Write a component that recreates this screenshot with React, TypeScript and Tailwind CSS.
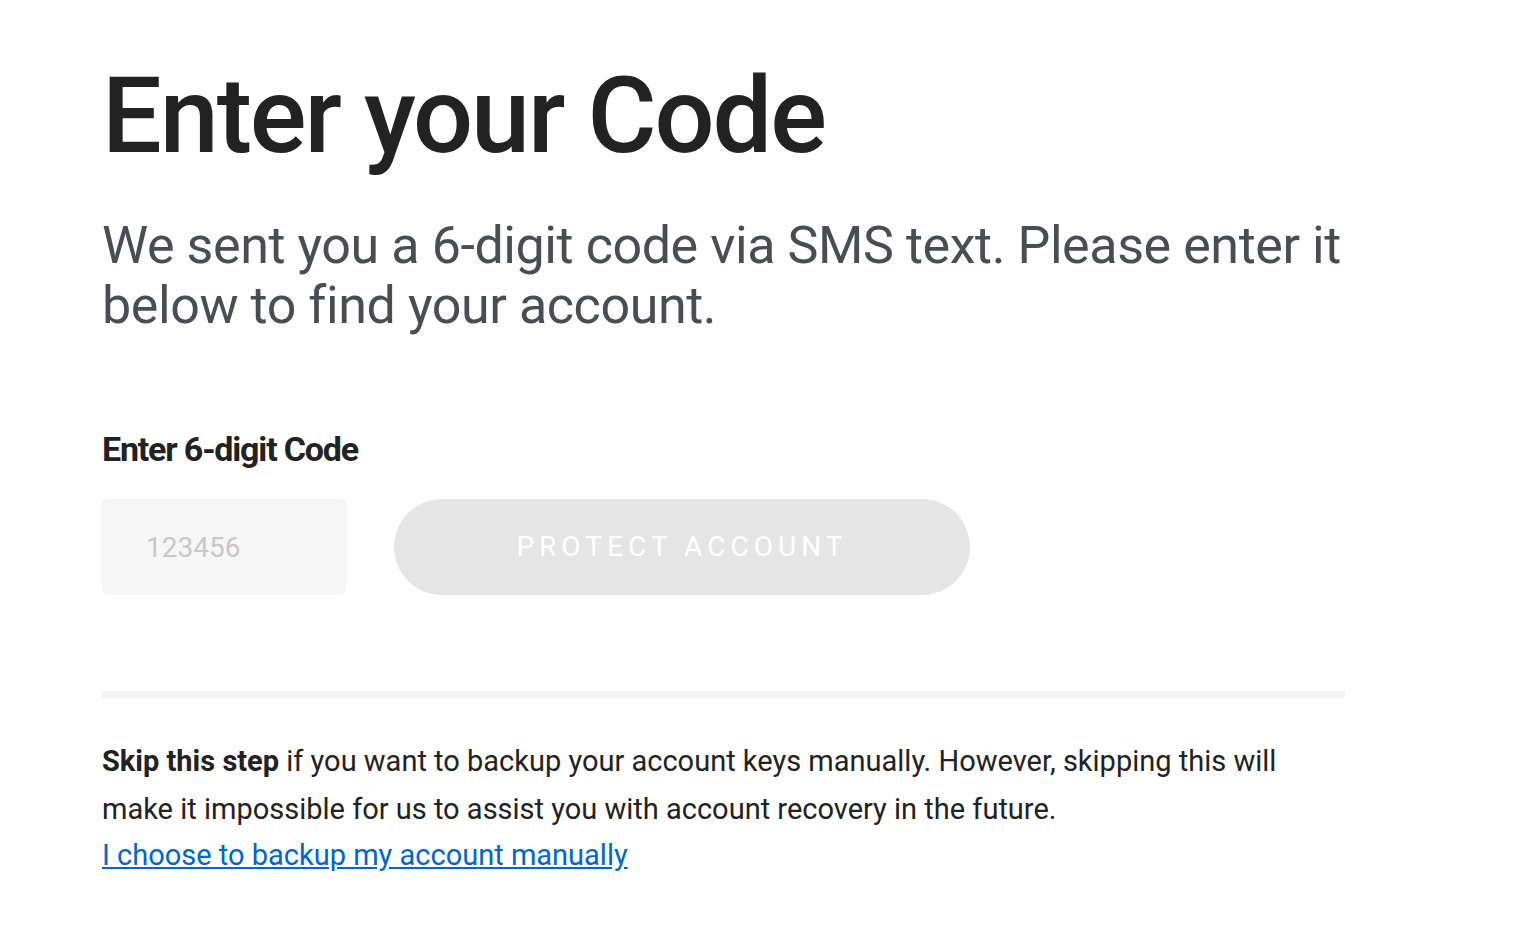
import React from "react";

export default function App() {
  return (
    <div className="min-h-screen bg-white">
      <div className="pl-[102px] pt-[56px] w-[1400px] font-['Roboto',sans-serif]">
        <h1 className="text-[106px] leading-[120px] font-medium tracking-[-0.02em] text-[#222222]">
          Enter your Code
        </h1>
        <p className="mt-[40px] text-[52px] leading-[60px] text-[#4a4d52] tracking-[-0.008em]">
          We sent you a 6-digit code via SMS text. Please enter it
          <br />
          below to find your account.
        </p>
        <label className="block mt-[93px] text-[34px] leading-[40px] font-bold tracking-[-0.035em] text-[#222222]">
          Enter 6-digit Code
        </label>
        <div className="mt-[30px] flex items-center gap-[48px]">
          <input
            placeholder="123456"
            className="w-[244px] h-[96px] rounded-[6px] bg-[#f7f7f7] pl-[44px] text-[28px] text-[#333] placeholder:text-[#c8c8c8] outline-none"
          />
          <button className="w-[576px] h-[96px] rounded-full bg-[#e6e6e6] text-white text-[28px] tracking-[0.18em] font-normal">
            PROTECT ACCOUNT
          </button>
        </div>
        <div className="mt-[96px] h-[7px] w-[1243px] bg-[#f5f5f5]" />
        <div className="mt-[39px] text-[29px] leading-[48px] text-[#222222] w-[1300px]">
          <p>
            <span className="font-bold">Skip this step</span> if you want to backup your account keys manually. However, skipping this will
            <br />
            make it impossible for us to assist you with account recovery in the future.
          </p>
          <a href="#" className="block leading-[44px] text-[#0066cc] underline">
            I choose to backup my account manually
          </a>
        </div>
      </div>
    </div>
  );
}
